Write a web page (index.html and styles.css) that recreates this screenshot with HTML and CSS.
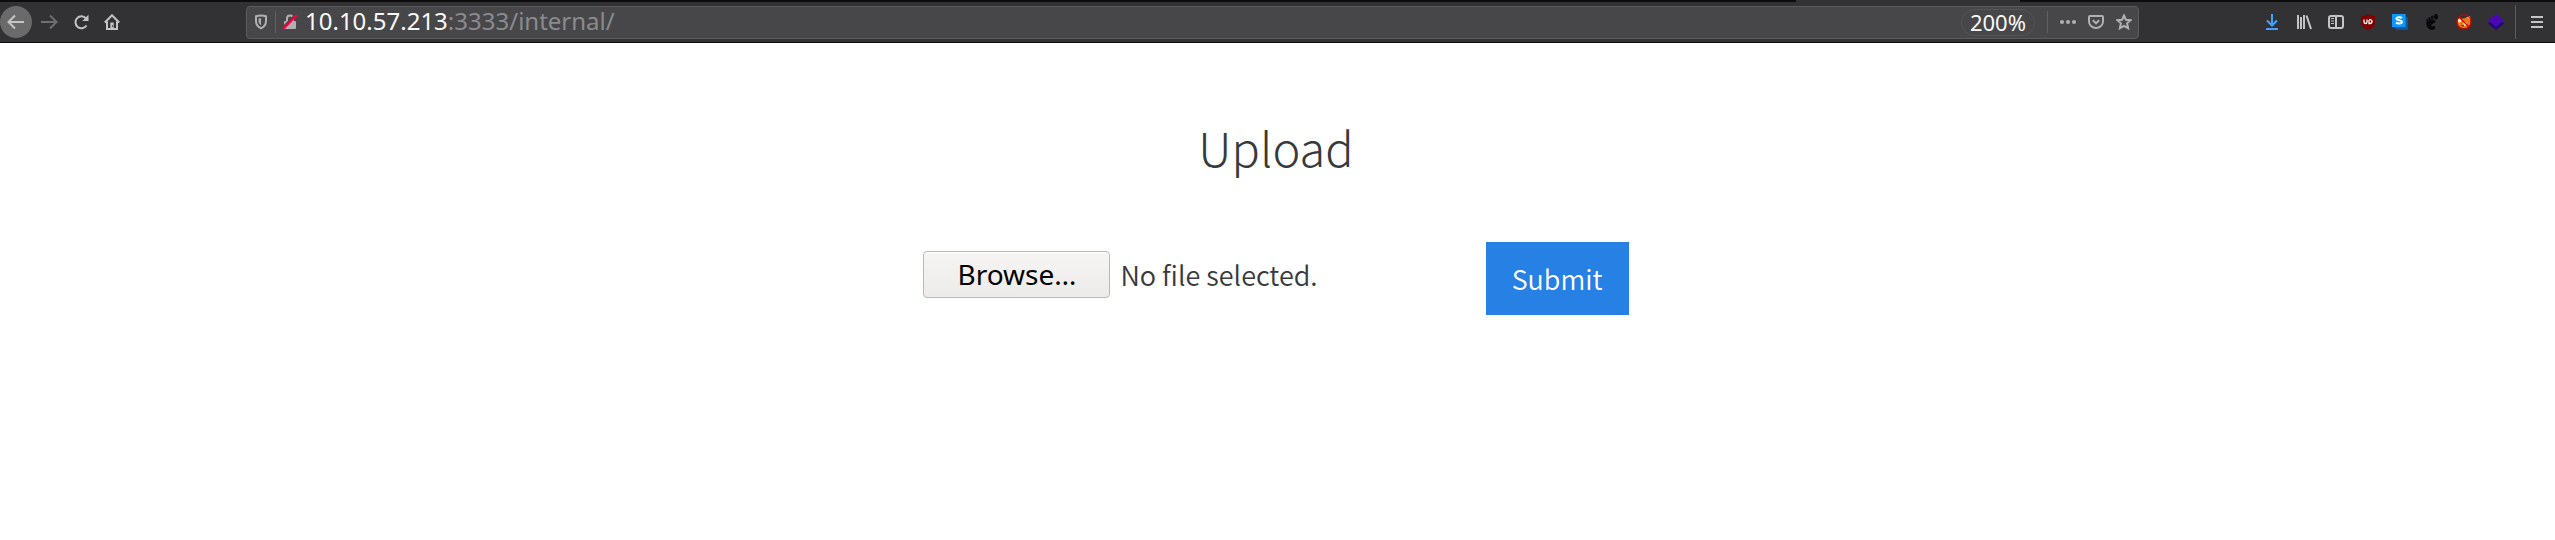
FILE: index.html
```
<!DOCTYPE html>
<html lang="en">
<head>
<meta charset="utf-8">
<title>Upload</title>
<link rel="stylesheet" href="styles.css">
</head>
<body>
<header class="chrome">
  <div class="tab-strip"><span class="active-tab"></span></div>
  <nav class="toolbar" aria-label="Browser toolbar">
    <div class="nav-buttons">
      <button class="back" aria-label="Back"><svg width="32" height="32" viewBox="0 0 32 32"><path d="M24 16H9M15 9.500L8.500 16l6.500 6.500" class="stroke"/></svg></button>
      <button class="tool dim" aria-label="Forward"><svg width="18" height="16" viewBox="0 0 18 16"><path d="M1 8h15M10 1.500L16.500 8 10 14.500" class="stroke"/></svg></button>
      <button class="tool" aria-label="Reload"><svg width="16" height="16" viewBox="0 0 16 16"><path d="M13.500 11.500A6 6 0 1 1 13 4.300" class="stroke"/><path d="M15.500 .8V7H9.300z" class="fill"/></svg></button>
      <button class="tool" aria-label="Home"><svg width="16" height="16" viewBox="0 0 16 16"><path d="M.8 8.500L8 1.300l7.200 7.200M3 7.500V15h10V7.500" class="stroke"/><path d="M6.300 8.500h3.400V15H6.300z" class="fill"/><path d="M8 11.200h1v1.600H8z" fill="#323234"/></svg></button>
    </div>
    <div class="address">
      <span class="shield"><svg width="14" height="16" viewBox="0 0 14 16"><path d="M7 1.500c2 0 3.500.3 5 .8V7c0 3.500-2 6-5 7.200C4 13 2 10.500 2 7V2.300C3.500 1.800 5 1.500 7 1.500z" class="stroke"/><path d="M7 4.300v7C5.200 10 4.600 8.600 4.600 7V4.500z" class="fill"/></svg></span>
      <span class="lock"><svg width="16" height="16" viewBox="0 0 16 16"><path d="M5 8V4.500a3 3 0 0 1 6 0V8" class="stroke"/><path d="M3 7h10a1 1 0 0 1 1 1v6a1 1 0 0 1-1 1H3a1 1 0 0 1-1-1V8a1 1 0 0 1 1-1z" class="fill"/><path d="M1 14L13.800 1" stroke="#474749" stroke-width="3"/><path d="M1.200 15L14.800 1.200" stroke="#ff0039" stroke-width="2"/></svg></span>
      <div class="url"><b>10.10.57.213</b>:3333/internal/</div>
      <button class="zoom">200%</button>
      <div class="page-actions">
        <button class="tool" aria-label="Page actions"><svg width="16" height="16" viewBox="0 0 16 16"><g class="fill"><circle cx="2" cy="8" r="2"/><circle cx="8" cy="8" r="2"/><circle cx="14" cy="8" r="2"/></g></svg></button>
        <button class="tool" aria-label="Pocket"><svg width="16" height="16" viewBox="0 0 16 16"><path d="M2 2h12a1 1 0 0 1 1 1v4.500a7 6.500 0 0 1-14 0V3a1 1 0 0 1 1-1zM4.800 6.300L8 9.300l3.200-3" class="stroke"/></svg></button>
        <button class="tool" aria-label="Bookmark"><svg width="16" height="16" viewBox="0 0 16 16"><path d="M8 1.500l1.900 4.200 4.700.5-3.500 3.100 1 4.900L8 11.800l-4.100 2.400 1-4.900-3.500-3.100 4.700-.5z" class="stroke"/></svg></button>
      </div>
    </div>
    <div class="extensions">
      <button class="tool" aria-label="Downloads"><svg width="16" height="16" viewBox="0 0 16 16" fill="none" stroke="#45a1ff" stroke-width="2"><path d="M8 0v11M3 6.500L8 11.500l5-5M2 15h12"/></svg></button>
      <button class="tool" aria-label="Library"><svg width="16" height="16" viewBox="0 0 16 16"><path d="M2 1v14M5 3v12M8 1v14M10.500 1.500L15 15" class="stroke"/></svg></button>
      <button class="tool" aria-label="Sidebars"><svg width="16" height="16" viewBox="0 0 16 16"><rect x="1" y="2" width="14" height="12" rx="2" class="stroke"/><path d="M8 2v12" class="stroke"/><path d="M3 4.500h3M3 7h3M3 9.500h3" stroke="#c4c4c5" stroke-width="1"/></svg></button>
      <button class="tool" aria-label="Ad blocker"><svg width="16" height="16" viewBox="0 0 16 16"><path d="M8 0c2 1.500 4.500 2 7 2v6c0 4-3 6.500-7 8-4-1.500-7-4-7-8V2c2.500 0 5-.5 7-2z" fill="#800000"/><path d="M4 5.500V8a1.500 1.500 0 0 0 3 0V5.500M9 6v3.500h1a2 1.900 0 0 0 0-3.800H9" fill="none" stroke="#fff" stroke-width="1.300"/></svg></button>
      <button class="tool" aria-label="Style manager"><svg width="16" height="16" viewBox="0 0 17 17"><path d="M2 14h12V2l3 2v13H5z" fill="#065a9c"/><path d="M0 0h14.500v14H0z" fill="#0c96ff"/><path d="M10.500 4.200c-1-.9-5.700-1.200-5.700.9 0 2.200 5.700.9 5.700 3.300 0 2.200-4.700 1.900-6.200.8" fill="none" stroke="#fff" stroke-width="2.200"/></svg></button>
      <button class="tool" aria-label="GNOME extensions"><svg width="16" height="16" viewBox="0 0 16 16" fill="#080808"><path d="M11 6.200C7 4.500 2 6.500 2.300 10c.3 3.500 3 6 5.700 6 2.500 0 4-2.300 3-3.700-1-1.200-2.300 1-3.600-.6C6 9.800 13.500 9 11 6.200z"/><ellipse cx="12" cy="2.700" rx="2" ry="2.800"/><ellipse cx="8.200" cy="3.300" rx="1.300" ry="1.900"/><ellipse cx="5.300" cy="4.500" rx="1" ry="1.500"/><ellipse cx="3" cy="6" rx=".8" ry="1.200"/></svg></button>
      <button class="tool" aria-label="Proxy switcher"><svg width="16" height="16" viewBox="0 0 16 16"><path d="M1.500 6C3 3 5 5 8 4.500L11 3l3.500 1v5c-1 3-3 5-6 5-4 0-6.500-2-7-5z" fill="#e97812"/><path d="M11 3l3-1 .5 4zM1.500 6L4 4l2 3-3 2zM7 9l3-1 1 3-3 1z" fill="#f7e4c8"/><path d="M5 11h3l-1 2z" fill="#5b2b0c"/><circle cx="8" cy="8" r="7.200" fill="none" stroke="#d00000" stroke-width="1.300"/><path d="M3 3l10 10" stroke="#d00000" stroke-width="1.300"/></svg></button>
      <button class="tool" aria-label="Layers"><svg width="16" height="16" viewBox="0 0 16 16"><path d="M0 9.500L8 4l8 5.500L8 16z" fill="#22047a"/><path d="M0 6.500L8 0l8 6.500-8 6.500z" fill="#4a08b5"/></svg></button>
    </div>
    <div class="menu"><button class="tool" aria-label="Open menu"><svg width="16" height="16" viewBox="0 0 16 16"><path d="M2 3h12M2 8h12M2 13h12" class="stroke"/></svg></button></div>
  </nav>
</header>
<main class="page">
  <h1 class="title">Upload</h1>
  <form class="upload">
    <div class="file">
      <input class="file-input" type="file" id="file">
      <label class="browse" for="file">Browse…</label>
      <span class="file-name">No file selected.</span>
    </div>
    <button class="submit" type="submit">Submit</button>
  </form>
</main>
</body>
</html>
```
FILE: styles.css
```
* { box-sizing: border-box; }
body {
  margin: 0;
  background: #fff;
  color: #373a3c;
  font-family: "Noto Sans CJK SC", "Noto Sans", sans-serif;
}
button {
  margin: 0;
  padding: 0;
  border: 0;
  background: none;
  color: inherit;
  font: inherit;
}
svg { display: block; }

.chrome {
  background: #323234;
  border-bottom: 1px solid #0c0c0d;
  color: #c4c4c5;
  font-family: "Noto Sans", sans-serif;
}
.tab-strip {
  display: flex;
  height: 2px;
  padding-left: 70.3%;
  background: #0c0c0d;
}
.active-tab { width: 224px; background: #323234; }
.toolbar { display: flex; align-items: center; height: 40px; }
.stroke { fill: none; stroke: currentColor; stroke-width: 2; }
.fill { fill: currentColor; }
.tool { display: flex; }

.nav-buttons { display: flex; align-items: center; gap: 15px; width: 246px; flex: none; }
.back {
  margin-right: -7px;
  border-radius: 50%;
  background: #6a6a6b;
}
.dim { color: #6f6f70; }

.address {
  display: flex;
  align-items: center;
  flex: 1;
  height: 33px;
  padding: 0 6px 0 7px;
  border: 1px solid #5c5c5e;
  border-radius: 4px;
  background: #474749;
  color: #b0b0b2;
}
.shield { padding: 3px 7px 3px 0; border-right: 1px solid #5f5f62; }
.lock { padding: 0 7px 0 6px; }
.url { flex: 1; font-size: 24px; line-height: 28px; padding-bottom: 2px; color: #8b8b8e; }
.url b { font-weight: 400; color: #f9f9fa; }
.zoom {
  height: 27px;
  padding: 0 8px;
  border: 1px solid #555558;
  border-radius: 14px;
  color: #f9f9fa;
  font-size: 22px;
  line-height: 25px;
}
.page-actions {
  display: flex;
  gap: 12px;
  margin-left: 12px;
  padding: 3px 0 3px 12px;
  border-left: 1px solid #5f6167;
}

.extensions { display: flex; align-items: center; gap: 16px; margin-left: 125px; }
.menu { margin-left: 11px; padding: 9px 10px 9px 13px; border-left: 1px solid #5c5c5e; }

.page { display: flex; flex-direction: column; align-items: center; padding: 68px 3px 0 0; }
.title { margin: 0; font-size: 47px; font-weight: 300; line-height: 72px; }
.upload {
  display: flex;
  align-items: flex-start;
  gap: 168px;
  margin-top: 59px;
  font-size: 27px;
  font-weight: 350;
}
.file { display: flex; align-items: center; gap: 10px; padding-top: 9px; }
.file-input { position: absolute; width: 1px; height: 1px; opacity: 0; }
.browse {
  padding: 0 33px;
  border: 1px solid #bfb8b1;
  border-radius: 4px;
  background: linear-gradient(#f6f5f4, #edebea);
  box-shadow: inset 0 1px #fff;
  color: #000;
  font-family: "Noto Sans", sans-serif;
  font-size: 28px;
  font-weight: 400;
  line-height: 45px;
}
.file-name { line-height: 47px; }
.submit { padding: 14px 26px; background: #2780e3; color: #fff; line-height: 45px; }
```
